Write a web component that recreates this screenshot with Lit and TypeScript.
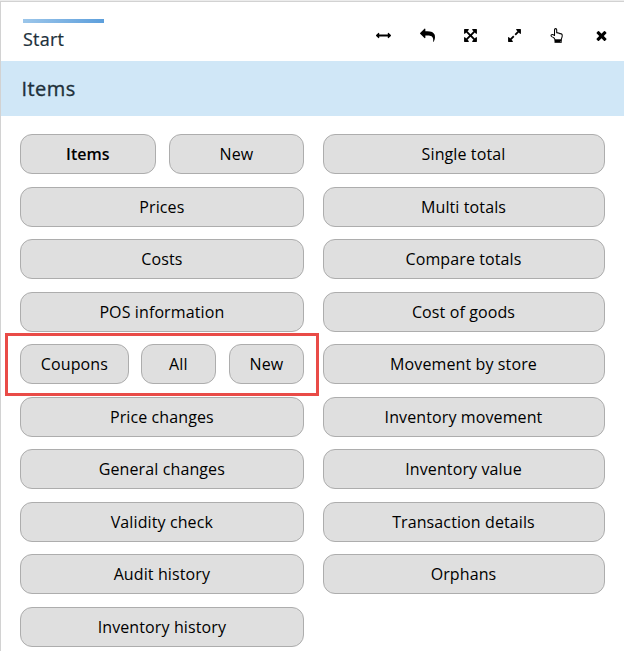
import { LitElement, html, css, svg } from "lit";
import { customElement } from "lit/decorators.js";

interface Item { label: string; cls?: string }

const left: Item[][] = [
  [{ label: "Items", cls: "half strong" }, { label: "New", cls: "rest" }],
  [{ label: "Prices" }],
  [{ label: "Costs" }],
  [{ label: "POS information" }],
  [{ label: "Coupons", cls: "wide" }, { label: "All", cls: "small" }, { label: "New", cls: "small last" }],
  [{ label: "Price changes" }],
  [{ label: "General changes" }],
  [{ label: "Validity check" }],
  [{ label: "Audit history" }],
  [{ label: "Inventory history" }],
];

const right: Item[][] = [
  "Single total", "Multi totals", "Compare totals", "Cost of goods", "Movement by store",
  "Inventory movement", "Inventory value", "Transaction details", "Orphans",
].map((label) => [{ label }]);

const icons = [
  { name: "Width", body: svg`<path d="M1792 896q0 26-19 45l-256 256q-19 19-45 19t-45-19-19-45v-128h-1024v128q0 26-19 45t-45 19-45-19l-256-256q-19-19-19-45t19-45l256-256q19-19 45-19t45 19 19 45v128h1024v-128q0-26 19-45t45-19 45 19l256 256q19 19 19 45z"/>` },
  { name: "Back", body: svg`<path d="M1792 1120q0 166-127 451-3 7-10.5 24t-13.5 30-13 22q-12 17-28 17-15 0-23.5-10t-8.5-25q0-9 2.5-26.5t2.5-23.5q5-68 5-123 0-101-17.500-181t-48.500-138.500-80-101-105.500-69.500-133-42.500-154-21.500-175.500-6h-224v256q0 26-19 45t-45 19-45-19l-512-512q-19-19-19-45t19-45l512-512q19-19 45-19t45 19 19 45v256h224q713 0 875 403 53 134 53 333z"/>` },
  { name: "Fit", body: svg`<path d="M1411 541l-355 355 355 355 144-144q29-31 70-14 39 17 39 59v448q0 26-19 45t-45 19h-448q-42 0-59-40-17-39 14-69l144-144-355-355-355 355 144 144q31 30 14 69-17 40-59 40h-448q-26 0-45-19t-19-45v-448q0-42 40-59 39-17 69 14l144 144 355-355-355-355-144 144q-19 19-45 19-12 0-24-5-40-17-40-59v-448q0-26 19-45t45-19h448q42 0 59 40 17 39-14 69l-144 144 355 355 355-355-144-144q-31-30-14-69 17-40 59-40h448q26 0 45 19t19 45v448q0 42-39 59-13 5-25 5-26 0-45-19z"/>` },
  { name: "Expand", body: svg`<path d="M883 1056q0 13-10 23l-332 332 144 144q19 19 19 45t-19 45-45 19h-448q-26 0-45-19t-19-45v-448q0-26 19-45t45-19 45 19l144 144 332-332q10-10 23-10t23 10l114 114q10 10 10 23zm781-864v448q0 26-19 45t-45 19-45-19l-144-144-332 332q-10 10-23 10t-23-10l-114-114q-10-10-10-23t10-23l332-332-144-144q-19-19-19-45t19-45 45-19h448q26 0 45 19t19 45z"/>` },
  { name: "Touch", body: svg`<path fill="none" stroke="#000" stroke-width="125" stroke-linejoin="round" d="M600 1440q0-130-110-240-150-110-290-170-80-40-80-120 0-140 140-140 130 0 280 130V210q0-135 130-135t130 135v350q110-30 180 60 120-50 200 60 280-40 280 220 0 160-65 310-55 120-55 230z"/><path d="M540 1390h860v380H540z"/><circle cx="1290" cy="1590" r="50" fill="#fff"/>` },
  { name: "Close", body: svg`<path d="M1490 1322q0 40-28 68l-136 136q-28 28-68 28t-68-28l-294-294-294 294q-28 28-68 28t-68-28l-136-136q-28-28-28-68t28-68l294-294-294-294q-28-28-28-68t28-68l136-136q28-28 68-28t68 28l294 294 294-294q28-28 68-28t68 28l136 136q28 28 28 68t-28 68l-294 294 294 294q28 28 28 68z"/>` },
];

@customElement("app-root")
export class AppRoot extends LitElement {
  static styles = css`
    :host { display: block; height: 651px; overflow: hidden; box-sizing: border-box;
      border-top: 1px solid #ececec; background: #fff; color: #000;
      font-family: "Open Sans", "Noto Sans", sans-serif; font-size: 16px; }
    .panel { height: 650px; box-sizing: border-box; border-top: 1px solid #d2d2d2; border-left: 1px solid #d2d2d2; }
    header { height: 59px; display: flex; justify-content: space-between; box-sizing: border-box; padding: 17px 15px 0 22px; }
    .tab { width: 81px; color: #20303a; font-size: 18px; line-height: 24px; letter-spacing: 0.2px; -webkit-text-stroke: 0.2px #20303a; }
    .tab::before { content: ""; display: block; height: 4px; margin-bottom: 4px; background: linear-gradient(90deg, #9cc6ea, #5d9fdc); }
    .tools { display: flex; gap: 28.6px; padding-top: 9px; }
    .tools svg { width: 15px; height: 15px; display: block; overflow: visible; }
    h1 { margin: 0; height: 55px; padding-left: 20.5px; background: #d0e7f7; color: #20303a;
      font-size: 20px; line-height: 55px; font-weight: 400; letter-spacing: 0.45px; -webkit-text-stroke: 0.35px #20303a; }
    main { display: flex; gap: 19px; padding: 18px 19px 0; }
    .col { width: 284px; display: flex; flex-direction: column; gap: 12.5px; }
    .col.right { width: 282px; }
    .row { position: relative; height: 40px; display: flex; justify-content: space-between; }
    button { flex: 1; box-sizing: border-box; height: 40px; margin: 0; padding: 0 0.3px 0 0; border: 1px solid #adadad; border-radius: 12px;
      background: #dfdfdf; color: #000; font: inherit; line-height: 38px; letter-spacing: 0.11px; }
    .right button { padding-right: 1px; }
    .half { flex: 0 0 136px; }
    .rest { flex: 0 0 135px; }
    .wide { flex: 0 0 109px; margin-right: 12px; }
    .small { flex: 0 0 75px; }
    .strong { font-weight: 600; letter-spacing: 0; }
    .marked { justify-content: flex-start; }
    .marked::after { content: ""; position: absolute; left: -15px; top: -11px; width: 314px; height: 63px;
      box-sizing: border-box; border: 3px solid #e94b47; pointer-events: none; }
    .last { margin-left: auto; }
  `;

  private column(rows: Item[][], side: string) {
    return html`<div class="col ${side}">${rows.map((row) => html`
      <div class="row ${row.length === 3 ? "marked" : ""}">
        ${row.map((i) => html`<button class=${i.cls ?? ""}>${i.label}</button>`)}
      </div>`)}</div>`;
  }

  render() {
    return html`<div class="panel">
      <header>
        <div class="tab">Start</div>
        <div class="tools">${icons.map((i) => html`<svg viewBox="0 0 1792 1792" role="img" aria-label=${i.name}>${i.body}</svg>`)}</div>
      </header>
      <h1>Items</h1>
      <main>${this.column(left, "left")}${this.column(right, "right")}</main>
    </div>`;
  }
}
